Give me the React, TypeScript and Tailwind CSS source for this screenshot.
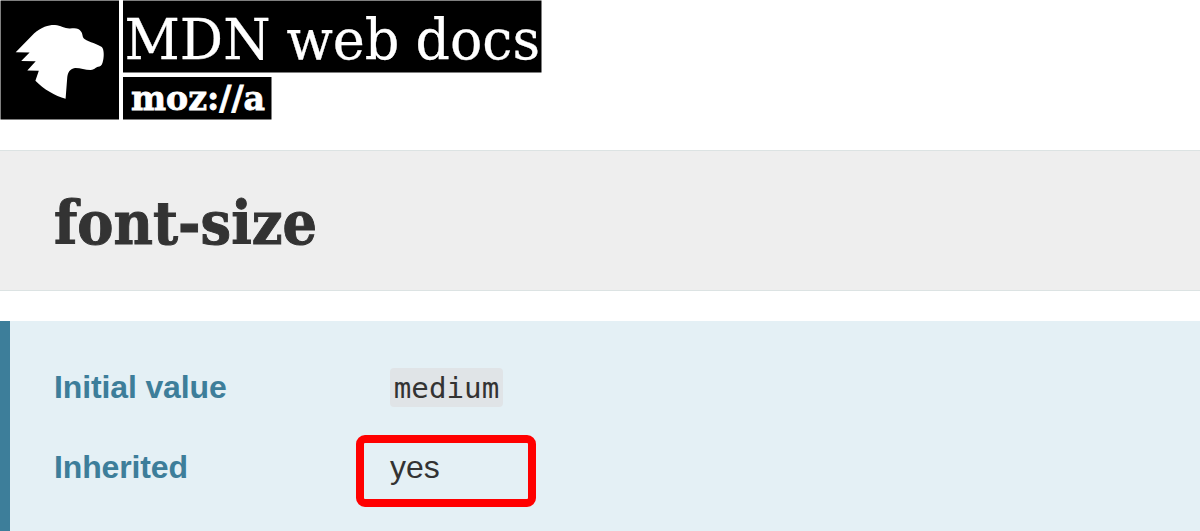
import React from "react";

function Logo() {
  return (
    <svg
      width="542"
      height="120"
      viewBox="0 0 542 120"
      className="block overflow-visible font-['DejaVu_Serif',serif]"
      role="img"
      aria-label="MDN web docs"
    >
      <rect x="0.5" y="0.5" width="118.5" height="119" fill="#000" />
      <path
        d="M15.7 52.2 L34 33.5 C42 26.5 50 24.7 55 25.1 C61 25.6 65 28.8 70 28.5 C75 27.9 79 27.8 81 31.5 C83.2 34.5 82 37.5 84.5 39 C89.5 42.2 97.5 44 101.8 47 C104 49 104.2 56 103.2 60 C102.5 63.5 101.5 66 99.5 66.6 C96 66.5 95.5 69.6 90.5 70.1 C85 70 80 67.9 75 68.1 C69.5 69 67.8 72.7 67.2 78 L65.6 98.7 C55 96 43.5 89 35.4 80.7 L38.8 70.8 L27.3 70.6 L35.7 61.2 L21.2 61 L29.6 52.4 Z"
        fill="#fff"
      />
      <rect x="123" y="0.5" width="418.5" height="72" fill="#000" />
      <g fill="#fff" stroke="#fff" strokeWidth="0.3" fontSize="56">
        <text x="124.5" y="59.2" textLength="146" lengthAdjust="spacingAndGlyphs">MDN</text>
        <text x="286.5" y="59.2" textLength="113" lengthAdjust="spacingAndGlyphs">web</text>
        <text x="415.5" y="59.2" textLength="124.5" lengthAdjust="spacingAndGlyphs">docs</text>
      </g>
      <rect x="123" y="77" width="148.5" height="42.5" fill="#000" />
      <text
        x="131"
        y="110.3"
        fill="#fff"
        stroke="#fff"
        strokeWidth="0.8"
        fontSize="34"
        fontWeight="700"
        textLength="134"
        lengthAdjust="spacingAndGlyphs"
      >
        moz://a
      </text>
    </svg>
  );
}

export default function App() {
  return (
    <main className="flex h-[531px] w-[1200px] flex-col overflow-hidden bg-white font-['Liberation_Sans',sans-serif] text-[#333]">
      <header className="h-[150px] shrink-0">
        <Logo />
      </header>
      <section className="flex h-[141px] shrink-0 items-center border-y border-[#dce3e3] bg-[#eeeeee] pt-[5px] pl-[54px]">
        <h1 className="origin-left scale-x-[0.912] whitespace-nowrap font-['DejaVu_Serif',serif] text-[59.5px] leading-[70px] font-bold [-webkit-text-stroke:1px_#333]">
          font-size
        </h1>
      </section>
      <section className="mt-[30px] flex-1 border-l-[10px] border-[#3d7e9a] bg-[#e4f0f5] pt-[26px] pl-11 text-[32px] leading-10">
        <dl className="grid grid-cols-[302px_180px] auto-rows-[80px] items-center">
          <dt className="font-bold tracking-[-0.13px] text-[#3d7e9a]">Initial value</dt>
          <dd className="flex pl-[34px]">
            <code className="flex h-[39px] w-[113px] items-center justify-center rounded-[4px] bg-[#e0e4e7] pt-[2px] font-['DejaVu_Sans_Mono',monospace] text-[29.2px]">
              medium
            </code>
          </dd>
          <dt className="font-bold tracking-[-0.13px] text-[#3d7e9a]">Inherited</dt>
          <dd className="mt-[7px] flex h-[72px] w-[180px] items-center rounded-[9px] border-8 border-[#ff0000] pb-[7px] pl-[26px]">
            yes
          </dd>
        </dl>
      </section>
    </main>
  );
}
